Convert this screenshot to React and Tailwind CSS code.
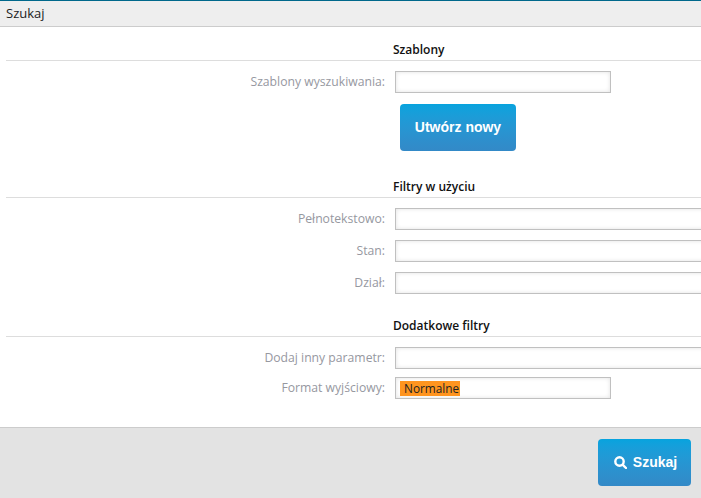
import React from "react";

const Heading = ({ children, className = "" }) => (
  <div className={`ml-[6px] h-[23px] border-b border-[#dddddd] pl-[387px] text-[12px] leading-[24px] font-[560] text-[#111111] ${className}`}>
    {children}
  </div>
);

const Row = ({ label, className = "", wide = true, children }) => (
  <div className={`flex items-center ${className}`}>
    <div className="w-[385px] shrink-0 text-right text-[12.2px] text-[#96989f]">{label}</div>
    <div className={`ml-[10px] h-[22px] shrink-0 border border-[#c0c0c0] bg-white shadow-[inset_0_0_4px_rgba(0,0,0,0.12)] ${wide ? "w-[400px]" : "w-[216px]"}`}>
      {children}
    </div>
  </div>
);

export default function App() {
  return (
    <div className="flex h-[498px] w-[701px] flex-col overflow-hidden bg-white font-['Open_Sans',sans-serif]">
      <div className="h-[27px] shrink-0 border-t border-b border-t-[#00688b] border-b-[#cccccc] bg-[#eeeeee] pl-[6px] text-[13px] leading-[25px] text-[#222222]">
        Szukaj
      </div>

      <div className="flex-1 pt-[11px]">
        <Heading>Szablony</Heading>
        <Row label="Szablony wyszukiwania:" wide={false} className="mt-[10px]" />
        <button className="mt-[11px] ml-[400px] block h-[47px] w-[116px] rounded-[4px] bg-gradient-to-b from-[#06a3de] to-[#3389c7] font-['Liberation_Sans',sans-serif] text-[14px] font-bold text-white">
          Utwórz nowy
        </button>

        <Heading className="mt-[24px]">Filtry w użyciu</Heading>
        <Row label="Pełnotekstowo:" className="mt-[10px]" />
        <Row label="Stan:" className="mt-[10px]" />
        <Row label="Dział:" className="mt-[10px]" />

        <Heading className="mt-[20px]">Dodatkowe filtry</Heading>
        <Row label="Dodaj inny parametr:" className="mt-[10px]" />
        <Row label="Format wyjściowy:" wide={false} className="mt-[8px]">
          <span className="mt-[3px] ml-[4px] block h-[15px] w-[60px] bg-[#ff9520] pl-[4px] text-[11.8px] leading-[15px] text-[#222222]">
            Normalne
          </span>
        </Row>
      </div>

      <div className="flex h-[71px] shrink-0 justify-end border-t border-[#cccccc] bg-[#e3e3e3] pt-[11px] pr-[10px]">
        <button className="flex h-[47px] w-[93px] items-center justify-center gap-[6px] rounded-[4px] bg-gradient-to-b from-[#06a3de] to-[#3389c7] pl-[2px] font-['Liberation_Sans',sans-serif] text-[14px] font-bold text-white">
          <svg width="13" height="13" viewBox="0 0 13 13" fill="none" stroke="white" strokeWidth="2.4">
            <circle cx="5.5" cy="5.5" r="4.2" />
            <path d="M8.8 8.8 L12 12" strokeLinecap="round" />
          </svg>
          Szukaj
        </button>
      </div>
    </div>
  );
}
